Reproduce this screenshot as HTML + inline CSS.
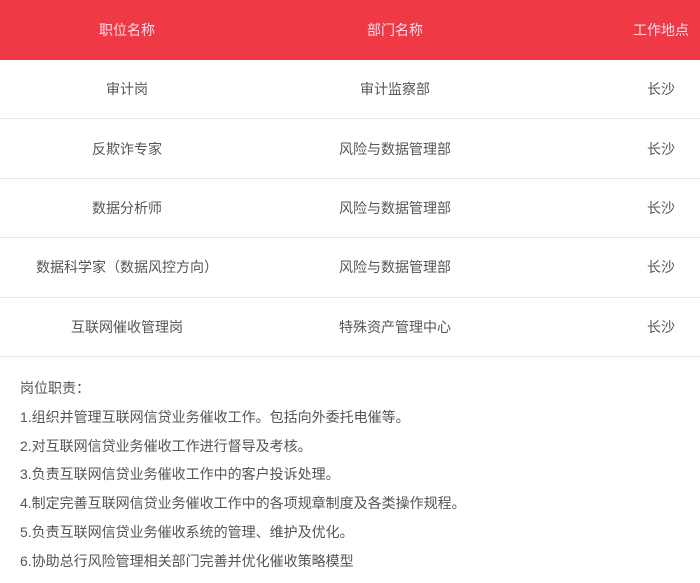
<!DOCTYPE html>
<html><head><meta charset="utf-8"><style>
body{margin:0;width:700px;height:583px;overflow:hidden;background:#fff;font-family:"Liberation Sans","Noto Sans CJK SC",sans-serif;font-size:14px;color:#555}
.row{position:relative;height:58.4px;border-bottom:1px solid #e8e8e8}
.hd{height:60px;background:#ef3a45;color:#fde;border:none}
.row span{position:absolute;top:50%;transform:translate(-50%,-50%);white-space:nowrap}
.c1{left:127px}.c2{left:395px}.c3{left:661px}
.desc{padding:17px 0 0 20px;line-height:28.8px}
</style></head><body>
<div class="row hd"><span class="c1">职位名称</span><span class="c2">部门名称</span><span class="c3">工作地点</span></div>
<div class="row"><span class="c1">审计岗</span><span class="c2">审计监察部</span><span class="c3">长沙</span></div>
<div class="row"><span class="c1">反欺诈专家</span><span class="c2">风险与数据管理部</span><span class="c3">长沙</span></div>
<div class="row"><span class="c1">数据分析师</span><span class="c2">风险与数据管理部</span><span class="c3">长沙</span></div>
<div class="row"><span class="c1">数据科学家（数据风控方向）</span><span class="c2">风险与数据管理部</span><span class="c3">长沙</span></div>
<div class="row"><span class="c1">互联网催收管理岗</span><span class="c2">特殊资产管理中心</span><span class="c3">长沙</span></div>
<div class="desc">岗位职责：<br>1.组织并管理互联网信贷业务催收工作。包括向外委托电催等。<br>2.对互联网信贷业务催收工作进行督导及考核。<br>3.负责互联网信贷业务催收工作中的客户投诉处理。<br>4.制定完善互联网信贷业务催收工作中的各项规章制度及各类操作规程。<br>5.负责互联网信贷业务催收系统的管理、维护及优化。<br>6.协助总行风险管理相关部门完善并优化催收策略模型</div>
</body></html>
